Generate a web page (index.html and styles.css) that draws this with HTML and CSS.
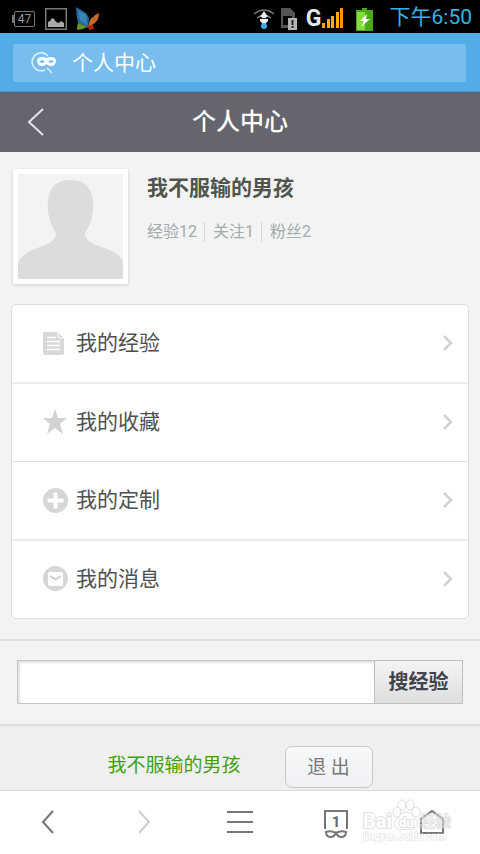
FILE: index.html
```html
<!DOCTYPE html>
<html lang="zh-CN">
<head>
    <meta charset="UTF-8">
    <meta name="viewport" content="width=device-width, initial-scale=1.0">
    <title>个人中心</title>
    <link rel="stylesheet" href="styles.css">
</head>
<body>
    <div class="status">
        <div class="status-left">
            <svg width="24" height="16" viewBox="0 0 24 16">
                <rect x="2.5" y=".5" width="20" height="15" rx="1.5" fill="none" stroke="#777"/>
                <path d="M1 4v8" stroke="#777" stroke-width="2"/>
                <text class="battery-text" x="12.5" y="12" text-anchor="middle">47</text>
            </svg>
            <svg width="22" height="22" viewBox="0 0 22 22">
                <rect x=".75" y=".75" width="20.5" height="20.5" fill="none" stroke="#777" stroke-width="1.5"/>
                <path d="M3 19v-5l2-1 2-3 2 1 2 3 3 1 2-2 3 2v4z" fill="#aaa"/>
            </svg>
            <svg width="24" height="24" viewBox="0 0 24 24">
                <path d="M0 0l10 6 3 5-1 10-10-5Q0 8 0 0z" fill="#24699f"/>
                <path d="M2 3l8 5 1 10-7-5z" fill="#3484b8"/>
                <path d="M23 6q0 6-4 10l-7 4q1-10 11-14z" fill="#c26a28"/>
                <path d="M2 16l9 4-4 2-6 1q0-4 1-7z" fill="#6c951e"/>
                <path d="M12 20l5-3 1 5-5 1z" fill="#b32218"/>
            </svg>
        </div>
        <div class="status-right">
            <svg width="22" height="22" viewBox="0 0 22 22">
                <path d="M1 6q10-8 20 0M4 10q7-6 14 0" fill="none" stroke="#777" stroke-width="1.5"/>
                <path d="M11 3l4 6h-2v2h2v2l-2 2v3H9v-3l-2-2v-2h2V9H7z" fill="#eee"/>
                <path d="M8 10.500h6" stroke="#333"/>
                <circle cx="11" cy="18" r="3" fill="#37a9ed"/>
            </svg>
            <svg class="sim" width="17" height="22" viewBox="0 0 17 22">
                <path d="M0 0h9l5 5v15H0z" fill="#555"/>
                <path d="M2 8h9v9H2z" fill="#080808"/>
                <path d="M7 10h9v12H7z" fill="#b4b4b4"/>
                <path d="M11.5 12v5m0 1v2" stroke="#222" stroke-width="2"/>
            </svg>
            <span class="net">G</span>
            <svg class="signal" width="21" height="20" viewBox="0 0 21 20">
                <path d="M0 15h3v5H0zM5 11h3v9H5zM9 8h3v12H9zM14 4h3v16h-3z" fill="#ffae00"/>
                <path d="M18 0h3v20h-3z" fill="#ff9500"/>
            </svg>
            <svg class="charge" width="17" height="23" viewBox="0 0 17 23">
                <path d="M6 0h5v2h6v21H0V2h6z" fill="#4ca818"/>
                <path d="M1 4h8v18H1z" fill="#84dc3a"/>
                <path d="M11 6l-7 7h4l-3 6 9-8h-4z" fill="#fff"/>
            </svg>
            <span class="clock">下午6:50</span>
        </div>
    </div>

    <div class="browser-top">
        <button type="button" class="address">
            <svg width="26" height="23" viewBox="0 0 26 23">
                <path d="M18 4A9 9 0 1 0 15 18M17 16l5 5" fill="none" stroke="#d8edfc" stroke-width="1.700"/>
                <path fill="#fff" fill-rule="evenodd" d="M7 8q1-3 5-3 3 0 4.500 1Q18 5 21 5q4 0 5 3 0 6-5 6-3 0-4.500-2-1.500 2-4.500 2-5 0-5-6zm2.500 1.500q2.500 3 5 0-2.500-3-5 0zm9 0q2.500 3 5 0-2.500-3-5 0z"/>
            </svg>
            <span>个人中心</span>
        </button>
    </div>

    <header class="header">
        <a class="back" href="#" aria-label="返回">
            <svg width="17" height="28" viewBox="0 0 17 28"><path d="M16 1L2 14l14 13" fill="none" stroke="#e4e4f0" stroke-width="2"/></svg>
        </a>
        <h1>个人中心</h1>
    </header>

    <main class="main">
        <section class="user">
            <svg class="avatar" viewBox="0 0 106 106">
                <path d="M0 106V91Q1 83 14 77l15-6q11-5 9-12-8-12-8-27Q30 6 53 6t23 26q0 15-8 27-2 7 9 12l16 6q13 6 13 14v15z" fill="#dcdcdc"/>
            </svg>
            <div class="user-info">
                <h2>我不服输的男孩</h2>
                <ul class="stats">
                    <li>经验12</li>
                    <li>关注1</li>
                    <li>粉丝2</li>
                </ul>
            </div>
        </section>

        <ul class="menu">
            <li><a href="#">
                <svg class="icon" width="26" height="26" viewBox="0 0 26 26">
                    <path d="M1 2h14l6 6v15q0 2-2 2H2q-2 0-2-2V3q0-1 1-1z" fill="#d8d8d8"/>
                    <path d="M15 2l6 6h-4q-2 0-2-2z" fill="#d8d8d8" stroke="#fff"/>
                    <path d="M4 7.500h9M4 11.500h13M4 15.500h13M4 19.500h13" stroke="#fff" stroke-width="1.500"/>
                </svg>
                <span>我的经验</span>
                <svg class="arrow" width="11" height="16" viewBox="0 0 11 16"><path d="M2 1l7 7-7 7"/></svg>
            </a></li>
            <li><a href="#">
                <svg class="icon" width="26" height="26" viewBox="0 0 26 26">
                    <path d="M12 0l3 9h9l-7 6 3 10-8-6-8 6 3-10-7-6h9z" fill="#d2d2d2"/>
                </svg>
                <span>我的收藏</span>
                <svg class="arrow" width="11" height="16" viewBox="0 0 11 16"><path d="M2 1l7 7-7 7"/></svg>
            </a></li>
            <li><a href="#">
                <svg class="icon" width="26" height="26" viewBox="0 0 26 26">
                    <circle cx="12.500" cy="13.500" r="12.500" fill="#d6d6d6"/>
                    <path d="M12.500 5.500v16M4.500 13.500h16" stroke="#fff" stroke-width="4"/>
                </svg>
                <span>我的定制</span>
                <svg class="arrow" width="11" height="16" viewBox="0 0 11 16"><path d="M2 1l7 7-7 7"/></svg>
            </a></li>
            <li><a href="#">
                <svg class="icon" width="26" height="26" viewBox="0 0 26 26">
                    <circle cx="12.500" cy="12.500" r="12.500" fill="#d6d6d6"/>
                    <rect x="5" y="6" width="15" height="14" rx="2" fill="#fff"/>
                    <path d="M7 10l5.500 3.500L18 10" fill="none" stroke="#ccc" stroke-width="1.500"/>
                </svg>
                <span>我的消息</span>
                <svg class="arrow" width="11" height="16" viewBox="0 0 11 16"><path d="M2 1l7 7-7 7"/></svg>
            </a></li>
        </ul>

        <form class="search">
            <input type="text" aria-label="搜经验">
            <button type="submit">搜经验</button>
        </form>

        <div class="account">
            <a href="#">我不服输的男孩</a>
            <button type="button">退 出</button>
        </div>
    </main>

    <nav class="toolbar">
        <button type="button" aria-label="后退">
            <svg width="28" height="32" viewBox="0 0 28 32"><path d="M19 5L9 16l10 11" stroke="#777"/></svg>
        </button>
        <button type="button" aria-label="前进">
            <svg width="28" height="32" viewBox="0 0 28 32"><path d="M9 5l10 11L9 27" stroke="#ccc"/></svg>
        </button>
        <button type="button" aria-label="菜单">
            <svg width="28" height="32" viewBox="0 0 28 32"><path d="M1 6h26M1 16h26M1 26h26" stroke="#777"/></svg>
        </button>
        <button type="button" aria-label="窗口">
            <svg width="28" height="32" viewBox="0 0 28 32">
                <path d="M3 23V5h22v18" stroke="#777"/>
                <path d="M14 27q-5-3-10-1 0 5 5 5 3 0 5-4 2 4 5 4 5 0 5-5-5-2-10 1z" stroke="#777"/>
                <text class="tab-count" x="14" y="21" text-anchor="middle">1</text>
            </svg>
        </button>
        <button type="button" aria-label="主页">
            <svg width="28" height="32" viewBox="0 0 28 32"><path d="M3 13v14h22V13L14 5z" stroke="#777"/></svg>
        </button>
        <div class="watermark">
            <svg width="92" height="46" viewBox="0 0 92 46">
                <g fill="none" stroke="#d8d8d8">
                    <ellipse cx="35" cy="13" rx="4" ry="5"/>
                    <ellipse cx="40" cy="6" rx="4" ry="5"/>
                    <ellipse cx="48" cy="6" rx="4" ry="5"/>
                    <ellipse cx="54" cy="13" rx="4" ry="5"/>
                    <path d="M44 13q5 0 7 5 6 4 4 9-3 5-11 3-9 2-11-3-2-5 4-9 2-5 7-5z"/>
                </g>
                <text class="mark-name" x="1" y="29">Bai</text>
                <text class="mark-du" x="37" y="28">du</text>
                <text class="mark-cn" x="57" y="28">经验</text>
                <text class="mark-url" x="1" y="41">jingyan.baidu.com</text>
            </svg>
        </div>
    </nav>
</body>
</html>
```

FILE: styles.css
```css
* { box-sizing: border-box; }
body { margin: 0; min-height: 100vh; display: flex; flex-direction: column; background: #f3f3f3; font-family: Roboto, "Noto Sans CJK SC", sans-serif; color: #505050; }
h1, h2, ul { margin: 0; padding: 0; }
ul { list-style: none; }
a { color: inherit; text-decoration: none; }
button, input { font-family: inherit; margin: 0; }
svg { display: block; flex: none; }

/* status bar */
.status { display: flex; justify-content: space-between; height: 33px; padding: 0 8px 0 12px; background: #000; }
.status-left { display: flex; align-items: center; gap: 9px; padding-top: 5px; }
.status-right { display: flex; align-items: center; padding-top: 5px; }
.battery-text { font-size: 12px; fill: #999; }
.sim { margin-left: 6px; }
.net { margin-left: 8px; color: #e3e8f2; font-size: 23px; line-height: 24px; font-weight: bold; }
.signal { margin-bottom: 2px; }
.charge { margin-left: 13px; }
.clock { margin-left: 17px; padding-bottom: 4px; color: #33b5e5; font-size: 21px; line-height: 24px; }

/* address bar */
.browser-top { padding: 11px 14px 9px 13px; background: #53ace6; border-bottom: 1px solid #4299d5; }
.address { display: flex; align-items: center; gap: 16px; width: 100%; height: 38px; padding: 0 17px; border: 0; border-radius: 2px; background: #77bded; color: #fff; font-size: 21px; line-height: 30px; }

.header { display: grid; grid-template-columns: 60px 1fr 60px; align-items: center; height: 60px; background: #65656e; color: #fff; }
.header h1 { font-size: 24px; line-height: 32px; font-weight: 500; text-align: center; }
.back { padding-left: 27px; }

.main { flex: 1; display: flex; flex-direction: column; }

.user { display: flex; gap: 19px; padding: 17px 13px 20px; }
.avatar { width: 115px; height: 115px; border: 5px solid #fff; background: #f3f3f3; box-shadow: 0 1px 3px #ccc; }
.user h2 { color: #50554e; font-size: 21px; line-height: 32px; font-weight: bold; margin-top: 3px; }
.stats { display: flex; margin-top: 18px; color: #a2abab; font-size: 16px; line-height: 20px; }
.stats li + li { margin-left: 7px; padding-left: 8px; border-left: 1px solid #d5d8d8; }

.menu { margin: 0 11px 20px; border: 1px solid #dedede; border-radius: 5px; background: #fff; }
.menu a { display: flex; align-items: center; height: 77px; padding: 0 15px 2px 31px; font-size: 21px; line-height: 30px; }
.menu li { border-bottom: 1px solid #e0e0e0; }
.menu li:nth-child(odd) { border-bottom: 2px solid #eaeaea; }
.menu li:last-child { border-bottom: 0; }
.menu .icon { margin-right: 7px; }
.arrow { margin-left: auto; fill: none; stroke: #d2d2d2; stroke-width: 2.5; }

.search { display: flex; padding: 19px 17px 20px; border-top: 2px solid #dfdfdf; border-bottom: 2px solid #dfdfdf; }
.search input { flex: 1; min-width: 0; height: 44px; padding: 0 10px; border: 1px solid #c5c5c5; border-right: 0; border-radius: 0; background: #fff; box-shadow: inset 2px 2px 2px #e2e2e2; font-size: 20px; }
.search button { width: 89px; height: 44px; padding: 0 0 3px; border: 1px solid #c0c0c0; background: linear-gradient(#f4f4f4, #dedede); color: #40424e; font-size: 20px; font-weight: bold; }

.account { flex: 1; display: flex; justify-content: center; align-items: flex-start; gap: 44px; padding: 20px 0 2px; background: #efefef; }
.account a { color: #3ca20e; font-size: 19px; line-height: 40px; }
.account button { width: 88px; height: 42px; padding: 0 0 4px; border: 1px solid #c8c8ca; border-radius: 7px; background: linear-gradient(#f7f8fa, #eff1f4); color: #777; font-size: 19px; }

/* bottom toolbar */
.toolbar { position: relative; display: flex; height: 64px; border-top: 1px solid #dcdcdc; background: #fff; }
.toolbar button { flex: 1; display: flex; justify-content: center; align-items: center; padding: 0 0 2px; border: 0; background: none; }
.toolbar button svg { fill: none; stroke-width: 2; }
.tab-count { fill: #666; font-size: 15px; font-weight: bold; }
.watermark { position: absolute; right: 26px; top: 8px; pointer-events: none; opacity: .8; }
.watermark text { fill: #fff; stroke: #dadada; stroke-width: 2; font-weight: bold; paint-order: stroke; }
.watermark .mark-name { font-size: 20px; }
.watermark .mark-du { font-size: 13px; }
.watermark .mark-cn { font-size: 16px; fill: none; stroke-width: 1; }
.watermark .mark-url { font-size: 10px; stroke-width: 1; }
```
